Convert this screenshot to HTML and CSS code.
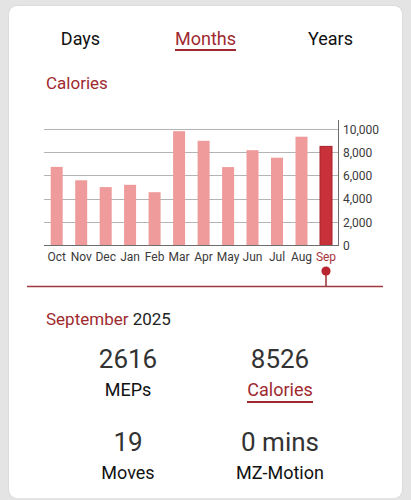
FILE: index.html
```html
<!DOCTYPE html>
<html lang="en">
<head>
  <meta charset="UTF-8">
  <meta name="viewport" content="width=device-width, initial-scale=1.0">
  <title>Activity</title>
  <link rel="stylesheet" href="styles.css">
</head>
<body>

  <div class="card">

    <!-- period tabs -->
    <div class="tabs">
      <div class="tab"><span>Days</span></div>
      <div class="tab active"><span>Months</span></div>
      <div class="tab"><span>Years</span></div>
    </div>

    <div class="chart-title">Calories</div>

    <!-- bar chart, coordinates are page pixels -->
    <svg class="chart" width="393" height="207" viewBox="9 93 393 207">
      <g class="grid">
        <line x1="44" y1="129.5" x2="338" y2="129.5"/>
        <line x1="44" y1="152.5" x2="338" y2="152.5"/>
        <line x1="44" y1="175.5" x2="338" y2="175.5"/>
        <line x1="44" y1="199.5" x2="338" y2="199.5"/>
        <line x1="44" y1="222.5" x2="338" y2="222.5"/>
      </g>

      <g class="bars">
        <rect x="50.7" y="166.9" width="12" height="78.4"/>
        <rect x="75.2" y="180.3" width="12" height="65"/>
        <rect x="99.7" y="187.1" width="12" height="58.2"/>
        <rect x="124.1" y="184.8" width="12" height="60.5"/>
        <rect x="148.6" y="192.2" width="12" height="53.1"/>
        <rect x="173.1" y="131.2" width="12" height="114.1"/>
        <rect x="197.6" y="140.8" width="12" height="104.5"/>
        <rect x="222.1" y="167.1" width="12" height="78.2"/>
        <rect x="246.5" y="150.2" width="12" height="95.1"/>
        <rect x="271" y="157.7" width="12" height="87.6"/>
        <rect x="295.5" y="136.7" width="12" height="108.6"/>
        <rect class="current" x="320" y="146.4" width="12" height="98.9"/>
      </g>

      <g class="axis">
        <line x1="44" y1="245.5" x2="339" y2="245.5"/>
        <line x1="338.5" y1="120" x2="338.5" y2="246"/>
      </g>

      <g class="ticks">
        <text x="343" y="133.5">10,000</text>
        <text x="343" y="156.5">8,000</text>
        <text x="343" y="179.5">6,000</text>
        <text x="343" y="203">4,000</text>
        <text x="343" y="226.5">2,000</text>
        <text x="343" y="249.5">0</text>
      </g>

      <g class="months">
        <text x="56.7" y="261">Oct</text>
        <text x="81.2" y="261">Nov</text>
        <text x="105.7" y="261">Dec</text>
        <text x="130.1" y="261">Jan</text>
        <text x="154.6" y="261">Feb</text>
        <text x="179.1" y="261">Mar</text>
        <text x="203.6" y="261">Apr</text>
        <text x="228.1" y="261">May</text>
        <text x="252.5" y="261">Jun</text>
        <text x="277" y="261">Jul</text>
        <text x="301.5" y="261">Aug</text>
        <text class="current" x="326" y="261">Sep</text>
      </g>

      <!-- selected month marker -->
      <g class="marker">
        <line x1="27" y1="286.5" x2="383" y2="286.5"/>
        <line x1="326" y1="272" x2="326" y2="286"/>
        <circle cx="326" cy="271" r="4.6"/>
      </g>
    </svg>

    <div class="period"><span class="red">September</span> 2025</div>

    <!-- totals -->
    <div class="stats">
      <div class="stat">
        <div class="value">2616</div>
        <div class="label">MEPs</div>
      </div>
      <div class="stat">
        <div class="value">8526</div>
        <div class="label active">Calories</div>
      </div>
      <div class="stat">
        <div class="value">19</div>
        <div class="label">Moves</div>
      </div>
      <div class="stat">
        <div class="value">0 mins</div>
        <div class="label">MZ-Motion</div>
      </div>
    </div>

  </div>

</body>
</html>
```

FILE: styles.css
```css
body {
  margin: 0;
  padding: 6px 9px 0;
  background-color: #e4e4e4;
  font-family: Roboto, "Noto Sans", sans-serif;
  color: #111;
}

/* Белая карточка */
.card {
  background-color: #fff;
  border-radius: 8px;
  padding: 22px 0 12px;
  box-shadow: 0 0 2px rgba(0, 0, 0, 0.12);
}

/* Вкладки */
.tabs {
  display: grid;
  grid-template-columns: repeat(3, 125px);
  padding: 0 9px;
}

.tab {
  text-align: center;
  font-size: 18px;
  line-height: 21px;
}

.tab span {
  display: inline-block;
  border-bottom: 2px solid transparent;
}

.tab.active span {
  color: #9e2a2f;
  border-bottom-color: #9e2a2f;
}

.chart-title {
  margin: 22px 0 0 37px;
  font-size: 17px;
  line-height: 20px;
  color: #9e2a2f;
}

/* График */
.chart {
  display: block;
}

.chart .grid line {
  stroke: #b4b4b4;
  stroke-width: 1;
}

.chart .axis line {
  stroke: #6d6d6d;
  stroke-width: 1;
}

.chart .bars rect {
  fill: #ef9a9b;
}

.chart .bars rect.current {
  fill: #c8303a;
  stroke: #a8232c;
  stroke-width: 1;
}

.chart text {
  font-family: Roboto, sans-serif;
  font-size: 12px;
  fill: #3a3a3a;
}

.chart .months text {
  text-anchor: middle;
}

.chart .months text.current {
  fill: #a8323a;
}

.chart .marker line {
  stroke: #9e3a3e;
  stroke-width: 1.6;
}

.chart .marker circle {
  fill: #b8252f;
}

/* Месяц и итоги */
.period {
  margin: 9px 0 0 37px;
  font-size: 17px;
  line-height: 20px;
  color: #222;
}

.red {
  color: #9e2a2f;
}

.stats {
  display: grid;
  grid-template-columns: 152px 152px;
  row-gap: 24px;
  padding-left: 43px;
  margin-top: 15px;
}

.stat {
  text-align: center;
}

.value {
  font-size: 26px;
  line-height: 30px;
  color: #333;
}

.label {
  display: inline-block;
  margin-top: 5px;
  font-size: 18px;
  line-height: 21px;
  padding-bottom: 1px;
  border-bottom: 2px solid transparent;
}

.label.active {
  color: #9e2a2f;
  border-bottom-color: #9e2a2f;
}
```
